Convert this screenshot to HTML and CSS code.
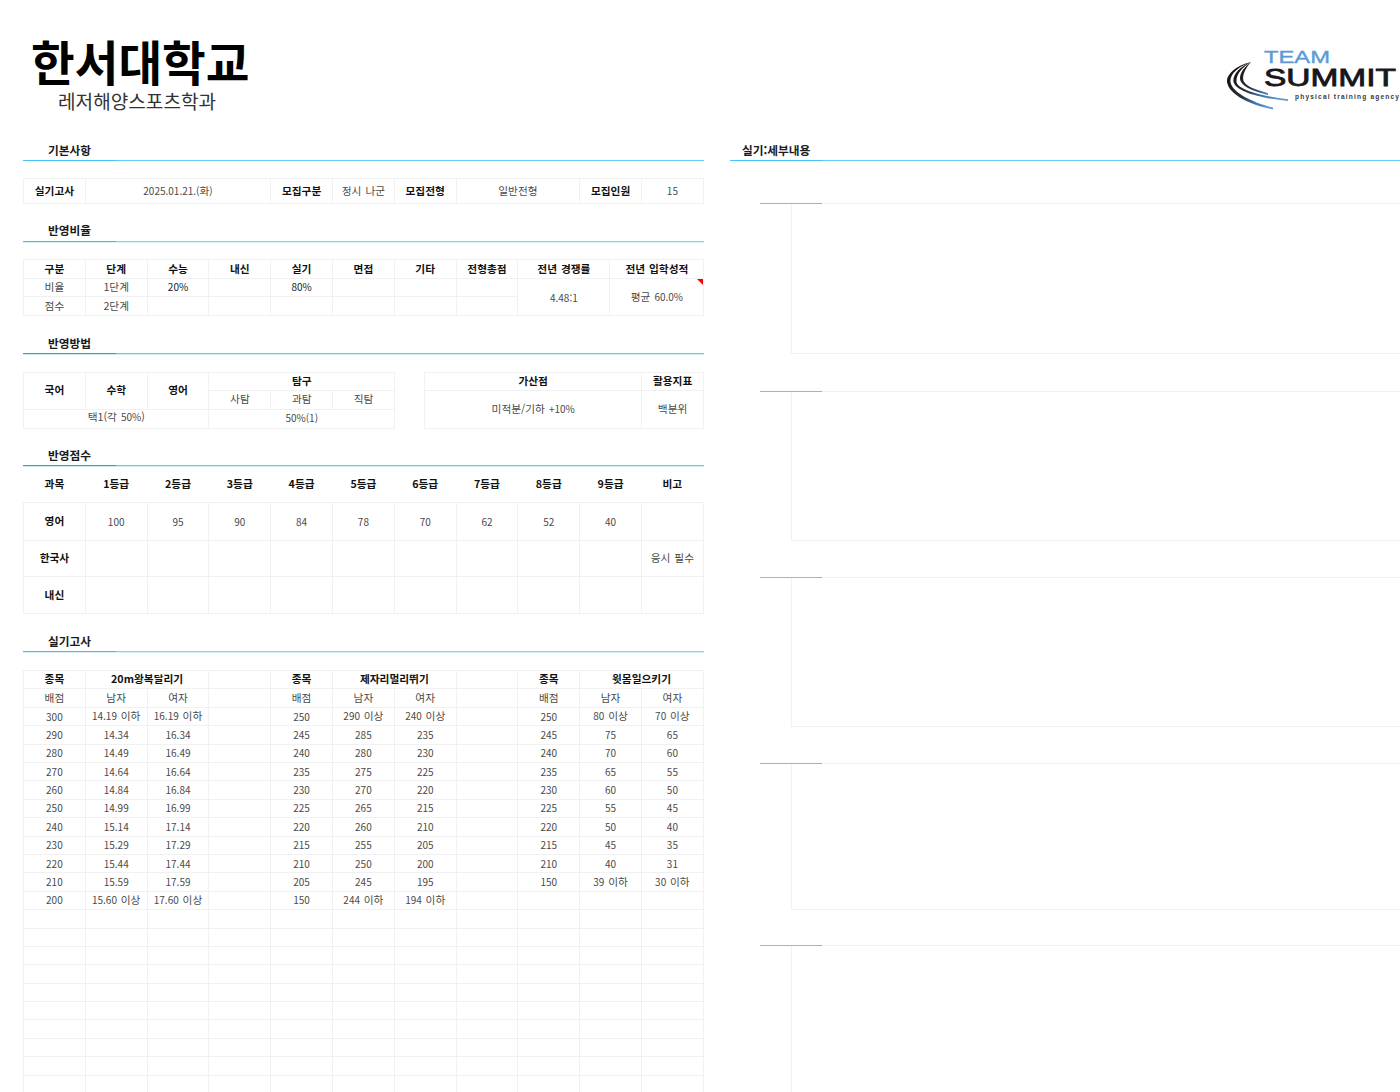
FILE: index.html
```html
<!DOCTYPE html>
<html lang="ko">
<head>
<meta charset="utf-8">
<title>한서대학교 레저해양스포츠학과</title>
<link rel="stylesheet" href="styles.css">
</head>
<body>
<header class="top">
  <div class="school">
    <h1>한서대학교</h1>
    <p>레저해양스포츠학과</p>
  </div>
  <svg class="logo" viewBox="0 0 174 62" width="174" height="62" aria-label="Team Summit">
    <defs>
      <linearGradient id="arc" gradientUnits="userSpaceOnUse" x1="8" y1="26" x2="44" y2="58">
        <stop offset="0" stop-color="#1c1412"/>
        <stop offset=".4" stop-color="#2a2c36"/>
        <stop offset=".7" stop-color="#3f74a8"/>
        <stop offset="1" stop-color="#5a9ad2"/>
      </linearGradient>
    </defs>
    <text class="logo-team" x="38" y="14" textLength="66" lengthAdjust="spacingAndGlyphs">TEAM</text>
    <text class="logo-summit" x="38" y="36.500" textLength="132" lengthAdjust="spacingAndGlyphs">SUMMIT</text>
    <text class="logo-tag" x="69" y="50" textLength="104" lengthAdjust="spacing">physical training agency</text>
    <path class="arc" d="M25 13C9 17 0 26 1 33C3 46 25 56 47 60.500L47 58.600C28 54 6 44 4.500 33C3.500 26 11 18 25 13Z"/>
    <path class="arc" d="M25 13C13 18 6.500 26 7.500 33C10 42 32 49 62 52L62 50.300C36 47 12 41 10.500 33C10 26 15 19 25 13Z"/>
    <path class="arc" d="M25 13C17 19 12.500 26 14.500 32C18 39 30 43 42 46L42 44.300C32 41 20 38 17.500 32C16 26 19 20 25 13Z"/>
  </svg>
</header>
<main class="sheet">
  <div class="left">
    <section class="block">
      <h2 class="head h-a"><span>기본사항</span></h2>
      <table class="grid info">
        <colgroup><col class="c"><col class="c"><col class="c"><col class="c"><col class="c"><col class="c"><col class="c"><col class="c"><col class="c"><col class="c"><col class="c"></colgroup>
        <tr class="h25"><th>실기고사</th><td colspan="3" class="n">2025.01.21.(<span class="k">화</span>)</td><th>모집구분</th><td>정시 나군</td><th>모집전형</th><td colspan="2">일반전형</td><th>모집인원</th><td class="n">15</td></tr>
      </table>
    </section>
    <section class="block">
      <h2 class="head h-b h-up"><span>반영비율</span></h2>
      <table class="grid ratio">
        <colgroup><col class="c"><col class="c"><col class="c"><col class="c"><col class="c"><col class="c"><col class="c"><col class="c"><col class="w92"><col class="w94"></colgroup>
        <tr class="h19"><th>구분</th><th>단계</th><th>수능</th><th>내신</th><th>실기</th><th>면접</th><th>기타</th><th>전형총점</th><th>전년 경쟁률</th><th>전년 입학성적</th></tr>
        <tr class="h19"><td>비율</td><td>1단계</td><td class="n dark">20%</td><td></td><td class="n dark">80%</td><td></td><td></td><td></td><td rowspan="2" class="n low">4.48:1</td><td rowspan="2" class="flag low">평균 <span class="m">60.0%</span><i class="mark"></i></td></tr>
        <tr class="h19"><td>점수</td><td>2단계</td><td></td><td></td><td></td><td></td><td></td><td></td></tr>
      </table>
    </section>
    <section class="block short">
      <h2 class="head h-c"><span>반영방법</span></h2>
      <div class="pair">
        <table class="grid method">
          <colgroup><col class="c"><col class="c"><col class="c"><col class="c"><col class="c"><col class="c"></colgroup>
          <tr class="h19"><th rowspan="2">국어</th><th rowspan="2">수학</th><th rowspan="2">영어</th><th colspan="3">탐구</th></tr>
          <tr class="h19 raise"><td>사탐</td><td>과탐</td><td>직탐</td></tr>
          <tr class="h19 raise"><td colspan="3">택1(각 <span class="m">50%</span>)</td><td colspan="3" class="n">50%(1)</td></tr>
        </table>
        <table class="grid bonus">
          <colgroup><col class="w217"><col class="c"></colgroup>
          <tr class="h19"><th>가산점</th><th>활용지표</th></tr>
          <tr class="h38"><td>미적분/기하 <span class="m">+10%</span></td><td>백분위</td></tr>
        </table>
      </div>
    </section>
    <section class="block tight">
      <h2 class="head h-c"><span>반영점수</span></h2>
      <table class="grid scores">
        <colgroup><col class="c"><col class="c"><col class="c"><col class="c"><col class="c"><col class="c"><col class="c"><col class="c"><col class="c"><col class="c"><col class="c"></colgroup>
        <tr class="h36 plain"><th>과목</th><th>1등급</th><th>2등급</th><th>3등급</th><th>4등급</th><th>5등급</th><th>6등급</th><th>7등급</th><th>8등급</th><th>9등급</th><th>비고</th></tr>
        <tr class="h38"><th>영어</th><td class="n">100</td><td class="n">95</td><td class="n">90</td><td class="n">84</td><td class="n">78</td><td class="n">70</td><td class="n">62</td><td class="n">52</td><td class="n">40</td><td></td></tr>
        <tr class="h36"><th>한국사</th><td></td><td></td><td></td><td></td><td></td><td></td><td></td><td></td><td></td><td>응시 필수</td></tr>
        <tr class="h37"><th>내신</th><td></td><td></td><td></td><td></td><td></td><td></td><td></td><td></td><td></td><td></td></tr>
      </table>
    </section>
    <section class="block practical-block">
      <h2 class="head h-b"><span>실기고사</span></h2>
      <table class="grid practical">
        <colgroup><col class="c"><col class="c"><col class="c"><col class="c"><col class="c"><col class="c"><col class="c"><col class="c"><col class="c"><col class="c"><col class="c"></colgroup>
        <tr><th>종목</th><th colspan="2">20m왕복달리기</th><td></td><th>종목</th><th colspan="2">제자리멀리뛰기</th><td></td><th>종목</th><th colspan="2">윗몸일으키기</th></tr>
        <tr class="ko"><td>배점</td><td>남자</td><td>여자</td><td></td><td>배점</td><td>남자</td><td>여자</td><td></td><td>배점</td><td>남자</td><td>여자</td></tr>
        <tr><td>300</td><td>14.19 <span class="k">이하</span></td><td>16.19 <span class="k">이하</span></td><td></td><td>250</td><td>290 <span class="k">이상</span></td><td>240 <span class="k">이상</span></td><td></td><td>250</td><td>80 <span class="k">이상</span></td><td>70 <span class="k">이상</span></td></tr>
        <tr><td>290</td><td>14.34</td><td>16.34</td><td></td><td>245</td><td>285</td><td>235</td><td></td><td>245</td><td>75</td><td>65</td></tr>
        <tr><td>280</td><td>14.49</td><td>16.49</td><td></td><td>240</td><td>280</td><td>230</td><td></td><td>240</td><td>70</td><td>60</td></tr>
        <tr><td>270</td><td>14.64</td><td>16.64</td><td></td><td>235</td><td>275</td><td>225</td><td></td><td>235</td><td>65</td><td>55</td></tr>
        <tr><td>260</td><td>14.84</td><td>16.84</td><td></td><td>230</td><td>270</td><td>220</td><td></td><td>230</td><td>60</td><td>50</td></tr>
        <tr><td>250</td><td>14.99</td><td>16.99</td><td></td><td>225</td><td>265</td><td>215</td><td></td><td>225</td><td>55</td><td>45</td></tr>
        <tr><td>240</td><td>15.14</td><td>17.14</td><td></td><td>220</td><td>260</td><td>210</td><td></td><td>220</td><td>50</td><td>40</td></tr>
        <tr><td>230</td><td>15.29</td><td>17.29</td><td></td><td>215</td><td>255</td><td>205</td><td></td><td>215</td><td>45</td><td>35</td></tr>
        <tr><td>220</td><td>15.44</td><td>17.44</td><td></td><td>210</td><td>250</td><td>200</td><td></td><td>210</td><td>40</td><td>31</td></tr>
        <tr><td>210</td><td>15.59</td><td>17.59</td><td></td><td>205</td><td>245</td><td>195</td><td></td><td>150</td><td>39 <span class="k">이하</span></td><td>30 <span class="k">이하</span></td></tr>
        <tr><td>200</td><td>15.60 <span class="k">이상</span></td><td>17.60 <span class="k">이상</span></td><td></td><td>150</td><td>244 <span class="k">이하</span></td><td>194 <span class="k">이하</span></td><td></td><td></td><td></td><td></td></tr>
        <tr><td></td><td></td><td></td><td></td><td></td><td></td><td></td><td></td><td></td><td></td><td></td></tr>
        <tr><td></td><td></td><td></td><td></td><td></td><td></td><td></td><td></td><td></td><td></td><td></td></tr>
        <tr><td></td><td></td><td></td><td></td><td></td><td></td><td></td><td></td><td></td><td></td><td></td></tr>
        <tr><td></td><td></td><td></td><td></td><td></td><td></td><td></td><td></td><td></td><td></td><td></td></tr>
        <tr><td></td><td></td><td></td><td></td><td></td><td></td><td></td><td></td><td></td><td></td><td></td></tr>
        <tr><td></td><td></td><td></td><td></td><td></td><td></td><td></td><td></td><td></td><td></td><td></td></tr>
        <tr><td></td><td></td><td></td><td></td><td></td><td></td><td></td><td></td><td></td><td></td><td></td></tr>
        <tr><td></td><td></td><td></td><td></td><td></td><td></td><td></td><td></td><td></td><td></td><td></td></tr>
        <tr><td></td><td></td><td></td><td></td><td></td><td></td><td></td><td></td><td></td><td></td><td></td></tr>
        <tr><td></td><td></td><td></td><td></td><td></td><td></td><td></td><td></td><td></td><td></td><td></td></tr>
      </table>
    </section>
  </div>
  <aside class="right">
    <h2 class="head h-a side-head"><span>실기:세부내용</span></h2>
    <div class="panels">
      <div class="panel p150"><i class="accent"></i><div class="box"></div></div>
      <div class="panel p149"><i class="accent"></i><div class="box"></div></div>
      <div class="panel p149"><i class="accent"></i><div class="box"></div></div>
      <div class="panel p146"><i class="accent"></i><div class="box"></div></div>
      <div class="panel p147"><i class="accent"></i><div class="box open"></div></div>
    </div>
  </aside>
</main>
</body>
</html>
```
FILE: styles.css
```css
* { box-sizing: border-box; }
html, body { margin: 0; padding: 0; background: #fff; }
body {
  width: 1400px;
  height: 1092px;
  overflow: hidden;
  font-family: "Noto Sans CJK KR", sans-serif;
  color: #4a4a4a;
}
.top {
  height: 140px;
  display: flex;
  justify-content: space-between;
  align-items: flex-start;
}
.school { padding: 32px 0 0 31px; }
.school h1 {
  margin: 0;
  font-size: 47.500px;
  line-height: 57px;
  font-weight: 700;
  color: #000;
}
.school p {
  margin: 0 0 0 27px;
  font-size: 19.100px;
  line-height: 24px;
  color: #333;
}
.logo { margin-top: 49px; flex: none; }
.logo-team { font: 400 16.500px "Liberation Sans", sans-serif; fill: #5b9bd5; stroke: #5b9bd5; stroke-width: .35px; }
.logo-summit { font: 400 23.500px "Liberation Sans", sans-serif; fill: #17171b; stroke: #17171b; stroke-width: .8px; }
.logo-tag { font: 700 6.600px "Liberation Sans", sans-serif; fill: #3a3a3a; }
.arc { fill: url(#arc); }
.sheet { display: flex; align-items: flex-start; }
.left { width: 681px; margin-left: 23px; flex: none; }
.right { width: 670px; margin-left: 26px; flex: none; }
.head {
  height: 21px;
  margin: 0;
  border-bottom: 1px solid #5ccbf8;
  font-size: 11.700px;
  line-height: 20px;
  font-weight: 700;
  color: #1a1a1a;
}
.head.h-up { line-height: 18px; }
.head span {
  display: block;
  width: 93px;
  height: 21px;
  padding-left: 25px;
  border-bottom: 1px solid #3bb8ee;
}
.h-a { border-bottom-color: #62cffb; }
.h-a span { border-bottom-color: #4cc3f5; }
.h-b { border-bottom-color: #84d6f8; box-shadow: 0 1px 0 #d6f1fc; }
.h-b span { border-bottom-color: #4db9e6; }
.h-c { border-bottom-color: #6cc9ef; box-shadow: 0 1px 0 #cbecf9; }
.h-c span { border-bottom-color: #1fa6e2; }
.side-head span { padding-left: 12px; width: 92px; }
.block { margin-bottom: 17px; }
.block.short { margin-bottom: 16px; }
.block > .grid { margin-top: 17px; }
.block > .pair, .practical-block > .grid { margin-top: 18px; }
.block.tight > .grid { margin-top: 0; }
.grid {
  width: 680px;
  table-layout: fixed;
  border-collapse: collapse;
  font-size: 10.700px;
  line-height: 1;
  word-spacing: 1px;
}
.grid th, .grid td {
  border: 1px solid #f1f1f1;
  padding: 0;
  text-align: center;
  vertical-align: middle;
}
.grid th { color: #111; font-weight: 700; }
.grid .dark { color: #222; }
.grid .n, .grid .m, .practical td { font-size: 10px; }
.grid .k, .practical .ko td { font-size: 10.700px; }
.c { width: 61.800px; }
.w92 { width: 92px; }
.w94 { width: 94px; }
.w217 { width: 217px; }
.h25 td, .h25 th { height: 25px; }
.h19 td, .h19 th { height: 18.600px; }
.h36 td, .h36 th { height: 36.500px; }
.h37 td, .h37 th { height: 37px; }
.h38 td, .h38 th { height: 38px; }
.ratio th { padding-top: 1px; }
.ratio .low { padding-top: 2px; }
.scores .h38 > * { padding-top: 1px; }
.method th[rowspan] { padding-bottom: 2px; }
.method .raise td { padding-bottom: 2px; }
.plain th { border: 0; border-bottom: 1px solid #f1f1f1; padding-top: 2px; }
.flag { position: relative; }
.mark {
  position: absolute;
  top: 0;
  right: 0;
  width: 0;
  height: 0;
  border-top: 6px solid #f00;
  border-left: 6px solid transparent;
}
.pair { display: flex; justify-content: space-between; width: 681px; }
.grid.method { width: 372px; }
.grid.bonus { width: 279px; }
.bonus .h38 td { height: 37.200px; }
.practical td, .practical th { height: 18.400px; }
.panels { padding: 42px 0 0 30px; }
.accent { display: block; width: 62px; height: 1px; background: #5ccbf8; position: relative; z-index: 1; }
.box {
  margin: -1px 0 0 31px;
  border: 1px solid #f1f1f1;
  border-right: 0;
}
.panel.p150 { margin-bottom: 37px; }
.panel.p150 .box { height: 151px; }
.panel.p149 { margin-bottom: 36px; }
.panel.p149 .box { height: 150px; }
.panel.p146 { margin-bottom: 35px; }
.panel.p146 .box { height: 147px; }
.panel.p147 .box { height: 148px; }
.box.open { border-bottom: 0; }
```
